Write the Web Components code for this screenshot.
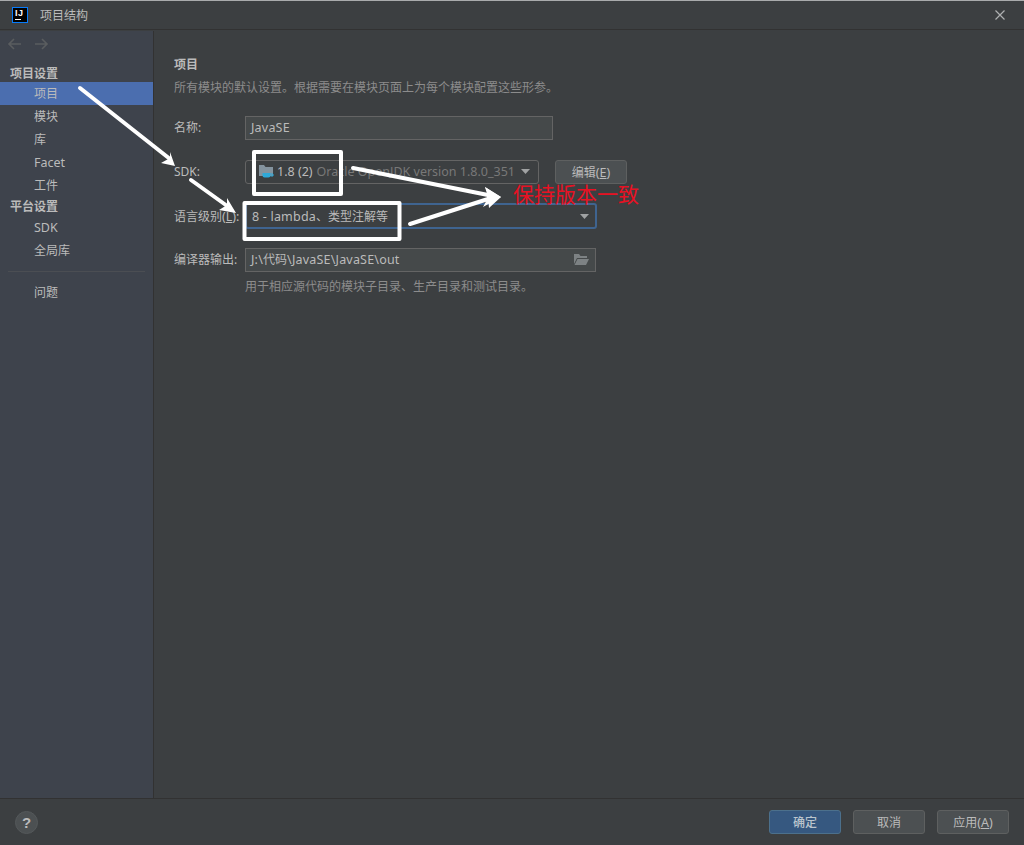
<!DOCTYPE html>
<html lang="zh"><head><meta charset="utf-8"><title>项目结构</title>
<style>
html,body{margin:0;padding:0;height:845px;overflow:hidden;background:#3c3f41}
body{font:12px/17px "Noto Sans","Noto Sans CJK SC",sans-serif;color:#bbb}
</style></head><body>
<ij-dialog>
  <ij-titlebar slot="title">项目结构</ij-titlebar>
  <ij-sidebar slot="side"></ij-sidebar>
  <ij-project slot="main"></ij-project>
  <ij-footer slot="foot"></ij-footer>
</ij-dialog>
<ij-annotations></ij-annotations>
<script>
function def(name,html){
  customElements.define(name,class extends HTMLElement{
    constructor(){super();this.attachShadow({mode:'open'}).innerHTML=html;}
  });
}
def('ij-dialog',`<style>
:host{display:grid;grid-template-columns:154px 1fr;grid-template-rows:30px 1fr 47px;width:1024px;height:845px;position:relative;box-sizing:border-box;border-top:1px solid #a9abac}
::slotted([slot=title]){grid-column:1/3}
::slotted([slot=foot]){grid-column:1/3}
</style><slot name="title"></slot><slot name="side"></slot><slot name="main"></slot><slot name="foot"></slot>`);

def('ij-titlebar',`<style>
:host{display:flex;align-items:center;box-sizing:border-box;height:29px;background:#3c3f41;border-bottom:1px solid #323232;padding:0 18px 0 12px;color:#bbb}
.logo{width:16px;height:16px;box-sizing:border-box;border:1px solid #087cfa;background:#000;margin-right:12px;position:relative;flex:none}
.logo b{position:absolute;left:2px;top:0;font:700 9px/10px "Liberation Sans",sans-serif;color:#fff;letter-spacing:.4px}
.logo i{position:absolute;left:2px;bottom:2px;width:6px;height:1px;background:#fff}
.t{flex:1}
svg{display:block}
</style><span class="logo"><b>IJ</b><i></i></span><span class="t"><slot></slot></span>
<svg width="12" height="12" viewBox="0 0 12 12"><path d="M1.500 1.500l9 9M10.500 1.500l-9 9" stroke="#aeb0b1" stroke-width="1.2" fill="none"/></svg>`);

def('ij-nav-row',`<style>
:host{display:flex;align-items:center;box-sizing:border-box;height:23px;padding-left:34px;color:#bbb}
:host([selected]){background:#4b6eaf}
:host([head]){padding-left:10px;font-weight:700;height:auto;line-height:17px;color:#bbb}
::slotted(span){font-size:12.5px}
</style><slot></slot>`);

def('ij-sidebar',`<style>
:host{display:flex;flex-direction:column;background:#3e434c;border-right:1px solid #323232;box-sizing:border-box;min-height:0}
.arrows{display:flex;gap:12px;padding:6px 0 0 7px;height:27px;box-sizing:border-box}
svg{display:block}
hr{border:0;height:1px;background:#4b4e53;margin:9px 8px 9px 8px}
.h1{margin-top:7px}
.h2{margin-top:1px;margin-bottom:1px}
</style>
<div class="arrows">
<svg width="15" height="14" viewBox="0 0 15 14"><path d="M14 7H2M7 2L2 7l5 5" stroke="#5a5d5f" stroke-width="1.600" fill="none"/></svg>
<svg width="15" height="14" viewBox="0 0 15 14"><path d="M1 7h12M8 2l5 5-5 5" stroke="#5a5d5f" stroke-width="1.600" fill="none"/></svg>
</div>
<ij-nav-row head class="h1">项目设置</ij-nav-row>
<ij-nav-row selected>项目</ij-nav-row>
<ij-nav-row>模块</ij-nav-row>
<ij-nav-row>库</ij-nav-row>
<ij-nav-row><span>Facet</span></ij-nav-row>
<ij-nav-row>工件</ij-nav-row>
<ij-nav-row head class="h2">平台设置</ij-nav-row>
<ij-nav-row><span>SDK</span></ij-nav-row>
<ij-nav-row>全局库</ij-nav-row>
<hr>
<ij-nav-row>问题</ij-nav-row>`);

def('ij-field',`<style>
:host{display:flex;align-items:center;box-sizing:border-box;height:24px;border:1px solid #646464;background:#45494a;padding:0 5px 2px;color:#bbb;white-space:nowrap;overflow:hidden}
:host([combo]){background:#3c3f41;border-radius:3px;padding-right:8px}
:host([focus]){height:26px;border:2px solid #3f6490;border-radius:3px;padding:0 6px 0 5px;background:#3c3f41}
.s{flex:1;display:flex;align-items:center;min-width:0}
::slotted(svg){display:block}
</style><span class="s"><slot></slot></span><slot name="end"></slot>`);

def('ij-button',`<style>
:host{display:inline-flex;align-items:center;justify-content:center;box-sizing:border-box;width:72px;height:24px;border:1px solid #5e6060;border-radius:3px;background:#4c5052;color:#bbb}
:host([primary]){background:#365880;border-color:#4c708c;font-weight:500;color:#bbc5ce}
</style><slot></slot>`);

def('ij-project',`<style>
:host{display:block;box-sizing:border-box;padding:25px 20px 0 20px;min-height:0}
h2{margin:0;font-size:12px;line-height:17px;font-weight:700;color:#bbb}
.d{color:#8c8c8c;margin:6px 0 0;line-height:17px}
.form{display:grid;grid-template-columns:71px 1fr;margin-top:20px}
.l{align-self:center;white-space:nowrap;padding-bottom:2px}
.r{display:flex;align-items:center;gap:16px}
.a{margin-top:20px}.b{margin-top:19px}.c{margin-top:19px}
.l.b{padding-bottom:0}
.hint{grid-column:2;color:#8c8c8c;margin-top:6px}
.lat{font-size:12.5px;letter-spacing:.2px}
.dim{color:#787878;margin-left:4px;font-size:12.5px}
.sdk{color:#bbb;margin-left:3px;font-size:12.5px}
.n{width:308px}.m{width:294px}.w{width:352px}.o{width:351px}
.p{font-size:12.5px}
</style>
<h2>项目</h2>
<p class="d">所有模块的默认设置。根据需要在模块页面上为每个模块配置这些形参。</p>
<div class="form">
  <span class="l">名称:</span><div class="r"><ij-field class="n"><span class="lat">JavaSE</span></ij-field></div>
  <span class="l a">SDK:</span><div class="r a">
    <ij-field combo class="m">
      <svg width="16" height="16" viewBox="0 0 16 16" style="margin-left:7px;flex:none"><path d="M1 2h5l1.500 2H15v9H1z" fill="#84939e"/><path d="M4.500 10h8v2.500q0 2-2 2h-4q-2 0-2-2z" fill="#2ea9d9"/><path d="M12.500 11h2.500v2h-2.500" fill="none" stroke="#2ea9d9"/></svg>
      <span class="sdk">1.8 (2)</span><span class="dim">Oracle OpenJDK version 1.8.0_351</span>
      <svg slot="end" width="9" height="5" viewBox="0 0 9 5" style="flex:none"><path d="M0 0h9L4.500 5z" fill="#a0a2a3"/></svg>
    </ij-field>
    <ij-button>编辑<span class="p">(<u>E</u>)</span></ij-button></div>
  <span class="l b">语言级别<span class="p">(<u>L</u>):</span></span><div class="r b">
    <ij-field combo focus class="w"><span><span class="lat">8 - lambda</span>、类型注解等</span>
      <svg slot="end" width="9" height="5" viewBox="0 0 9 5" style="flex:none"><path d="M0 0h9L4.500 5z" fill="#a0a2a3"/></svg>
    </ij-field></div>
  <span class="l c">编译器输出:</span><div class="r c">
    <ij-field class="o"><span><span class="lat">J:\\</span>代码<span class="lat">\\JavaSE\\JavaSE\\out</span></span>
      <svg slot="end" width="16" height="12" viewBox="0 0 16 12" style="flex:none;margin-right:1px"><path d="M1 1h5l1.500 2H14v2H4L1 11z" fill="#7d8284"/><path d="M4.500 6H16l-3 6H1.500z" fill="#7d8284"/></svg>
    </ij-field></div>
  <div class="hint">用于相应源代码的模块子目录、生产目录和测试目录。</div>
</div>`);

def('ij-footer',`<style>
:host{display:flex;align-items:center;box-sizing:border-box;height:47px;border-top:1px solid #323232;padding:0 15px 0 15px;gap:12px;background:#3c3f41}
.help{width:23px;height:23px;border-radius:50%;background:#4c5052;border:1px solid #54585a;box-sizing:border-box;color:#bbb;display:flex;align-items:center;justify-content:center;font:700 15px/1 "Liberation Sans",sans-serif}
.sp{flex:1}
.p{font-size:12.5px}
</style><span class="help">?</span><span class="sp"></span>
<ij-button primary>确定</ij-button><ij-button>取消</ij-button><ij-button>应用<span class="p">(<u>A</u>)</span></ij-button>`);

def('ij-annotations',`<style>
:host{position:absolute;left:0;top:0;width:1024px;height:845px;pointer-events:none;display:block}
svg{position:absolute;left:0;top:0}
.note{position:absolute;left:513px;top:183px;font:400 21px/21px "Noto Sans CJK SC",sans-serif;color:#e81123;white-space:nowrap}
</style>
<svg width="1024" height="845" viewBox="0 0 1024 845">
<g fill="none" stroke="#fff" stroke-linecap="round" stroke-width="4">
<path d="M80 88L170 159"/><path d="M191 180L230 208"/>
<path d="M353 168L488 195"/><path d="M410 224L488 199"/>
</g>
<g fill="#fff">
<path d="M175 166L161 163L170 158L170 152z"/>
<path d="M236 213L219 210L227 205L227 198z"/>
<path d="M501 197L485 187L489 196L483 207z"/>
<path d="M501 197L485 187L488 197L489 208z"/>
</g>
<g fill="none" stroke="#fff" stroke-width="4" stroke-linejoin="round">
<rect x="254" y="152" width="87" height="42"/>
<rect x="244.500" y="203" width="155" height="36"/>
</g></svg>
<span class="note">保持版本一致</span>`);
</script>
</body></html>
